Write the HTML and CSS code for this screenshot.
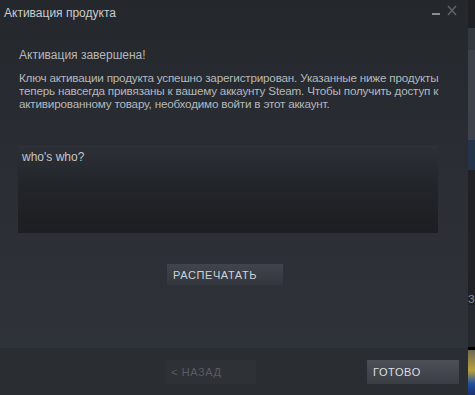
FILE: index.html
```html
<!DOCTYPE html>
<html lang="ru">
<head>
    <meta charset="UTF-8">
    <title>Активация продукта</title>
    <link rel="stylesheet" href="styles.css">
</head>
<body>
    <div class="screen">
        <!-- Dialog window -->
        <div class="dialog">
            <div class="titlebar">
                <span class="title">Активация продукта</span>
                <div class="window-buttons">
                    <span class="btn-min"></span>
                    <svg class="btn-close" width="10" height="11" viewBox="0 0 10 11">
                        <path d="M1 1 L9 10 M9 1 L1 10" stroke="#5f636a" stroke-width="1.6" fill="none"/>
                    </svg>
                </div>
            </div>

            <div class="content">
                <p class="heading">Активация завершена!</p>
                <p class="message">Ключ активации продукта успешно зарегистрирован. Указанные ниже продукты<br>теперь навсегда привязаны к вашему аккаунту Steam. Чтобы получить доступ к<br>активированному товару, необходимо войти в этот аккаунт.</p>
                <div class="product-list">who's who?</div>
                <div class="print-row">
                    <button class="print-btn">РАСПЕЧАТАТЬ</button>
                </div>
            </div>

            <div class="footer">
                <button class="back-btn">&lt; НАЗАД</button>
                <button class="done-btn">ГОТОВО</button>
            </div>
        </div>

        <!-- Background app peeking out -->
        <div class="side-strip">
            <div class="strip-top"></div>
            <div class="strip-grey"></div>
            <div class="strip-light"></div>
            <div class="strip-blue"></div>
            <div class="strip-dark"></div>
            <div class="strip-text">З</div>
            <div class="strip-dark2"></div>
            <div class="strip-black"></div>
            <div class="strip-pic"></div>
        </div>
    </div>
</body>
</html>
```

FILE: styles.css
```css
/* General reset */
* {
    margin: 0;
    padding: 0;
    box-sizing: border-box;
}

body {
    background-color: #1e2024;
    font-family: "Liberation Sans", Arial, sans-serif;
    font-size: 12px;
    color: #b4b8bd;
}

.screen {
    display: flex;
    width: 475px;
    height: 395px;
    overflow: hidden;
}

/* Dialog */
.dialog {
    width: 468px;
    height: 395px;
    display: flex;
    flex-direction: column;
    background: linear-gradient(to bottom, #24272c 0%, #2a2d33 40%, #30343b 100%);
}

.titlebar {
    height: 28px;
    display: flex;
    align-items: center;
    justify-content: space-between;
    padding: 0 11px 2px 4px;
}

.title {
    color: #c9ccd0;
    font-size: 12px;
}

.window-buttons {
    display: flex;
    align-items: flex-end;
    gap: 7px;
    margin-top: -6px;
}

.btn-min {
    display: block;
    width: 8px;
    height: 2px;
    margin-bottom: 1px;
    background-color: #8a8e94;
}

.btn-close {
    display: block;
}

/* Content area */
.content {
    flex: 1;
    padding: 20px 18px 0 19px;
}

.heading {
    line-height: 14px;
    margin-bottom: 9px;
}

.message {
    font-size: 11.7px;
    line-height: 13px;
    letter-spacing: -0.2px;
    white-space: nowrap;
    margin-bottom: 36px;
}

.product-list {
    width: 420px;
    height: 87px;
    margin-left: -1px;
    padding: 3px 4px;
    color: #c4c7cb;
    background: linear-gradient(to bottom, #2c2f35 0%, #22252a 45%, #1c1e21 100%);
    border-top: 1px solid #30343a;
}

.print-row {
    display: flex;
    padding: 31px 0 0 148px;
}

.print-btn {
    width: 116px;
    height: 21px;
    border: none;
    text-align: left;
    padding: 0 6px;
    font-family: "Liberation Sans", Arial, sans-serif;
    font-size: 11px;
    letter-spacing: 0.6px;
    color: #cfd2d6;
    background: linear-gradient(to bottom, #40444c 0%, #33363d 100%);
}

/* Footer */
.footer {
    height: 47px;
    display: flex;
    align-items: flex-start;
    padding: 12px 9px 0 165px;
    background-color: #2a2d32;
}

.footer button {
    height: 24px;
    border: none;
    text-align: left;
    padding: 0 6px;
    font-family: "Liberation Sans", Arial, sans-serif;
    font-size: 11px;
    letter-spacing: 0.6px;
}

.back-btn {
    width: 91px;
    color: #595d63;
    background-color: #2e3136;
}

.done-btn {
    width: 92px;
    margin-left: auto;
    color: #dcdfe2;
    background: linear-gradient(to bottom, #4b4f57 0%, #3a3d44 100%);
}

/* Side strip of the window behind */
.side-strip {
    width: 7px;
    display: flex;
    flex-direction: column;
}

.strip-top { height: 28px; background-color: #1e2024; }
.strip-grey { height: 22px; background-color: #34383f; }
.strip-light { height: 90px; background-color: #3e424a; }
.strip-blue { height: 30px; background-color: #23344a; }
.strip-dark { height: 123px; background-color: #1f2125; }
.strip-text {
    height: 12px;
    font-size: 11px;
    line-height: 12px;
    color: #8a8e94;
    background-color: #1f2125;
}
.strip-dark2 { height: 42px; background-color: #25282c; }
.strip-black { height: 3px; background-color: #000; }
.strip-pic {
    flex: 1;
    background: linear-gradient(to bottom, #6a6a50 0%, #b8a040 45%, #2050a0 75%, #1a3070 100%);
}
```
